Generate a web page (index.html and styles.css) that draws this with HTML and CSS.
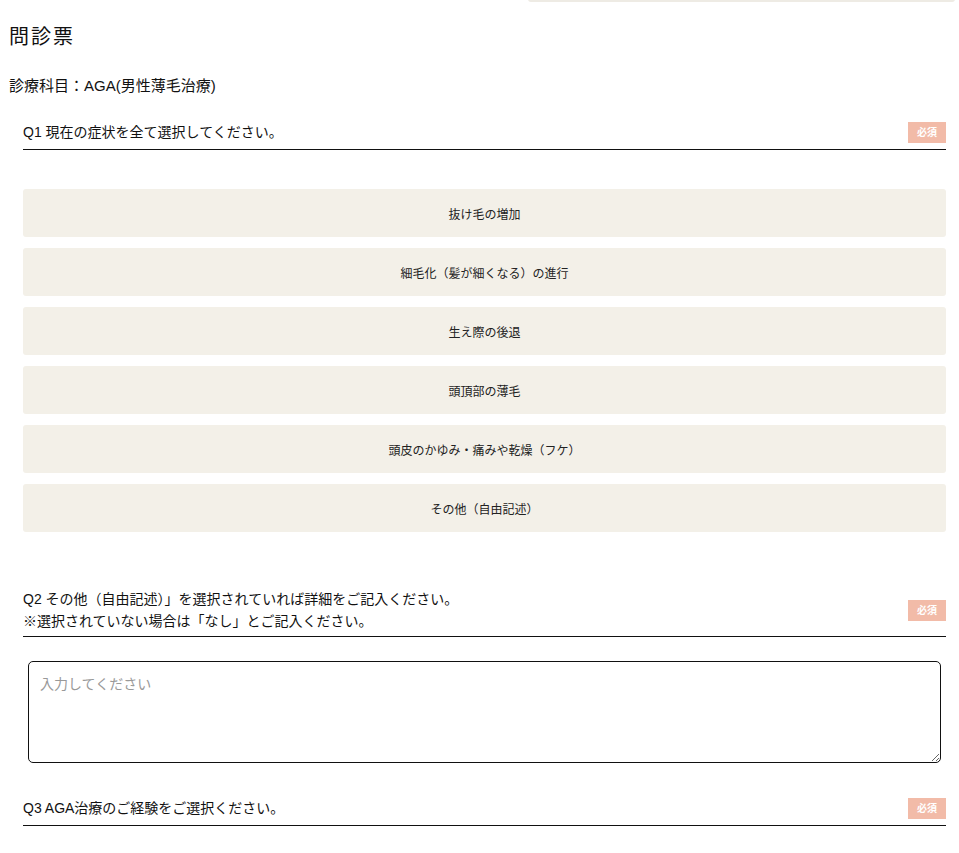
FILE: index.html
```html
<!DOCTYPE html>
<html lang="ja">
<head>
    <meta charset="UTF-8">
    <meta name="viewport" content="width=device-width, initial-scale=1.0">
    <title>問診票</title>
    <link rel="stylesheet" href="styles.css">
</head>
<body>
    <div class="top-bar"></div>

    <h1>問診票</h1>
    <p class="subject">診療科目：AGA(男性薄毛治療)</p>

    <div class="question q1">
        <div class="q-head">
            <p class="q-text">Q1 現在の症状を全て選択してください。</p>
            <span class="required">必須</span>
        </div>
        <div class="options">
            <button class="option">抜け毛の増加</button>
            <button class="option">細毛化（髪が細くなる）の進行</button>
            <button class="option">生え際の後退</button>
            <button class="option">頭頂部の薄毛</button>
            <button class="option">頭皮のかゆみ・痛みや乾燥（フケ）</button>
            <button class="option">その他（自由記述）</button>
        </div>
    </div>

    <div class="question q2">
        <div class="q-head">
            <p class="q-text">Q2 その他（自由記述）」を選択されていれば詳細をご記入ください。<br>※選択されていない場合は「なし」とご記入ください。</p>
            <span class="required">必須</span>
        </div>
        <textarea class="answer" placeholder="入力してください"></textarea>
    </div>

    <div class="question q3">
        <div class="q-head">
            <p class="q-text">Q3 AGA治療のご経験をご選択ください。</p>
            <span class="required">必須</span>
        </div>
    </div>
</body>
</html>
```

FILE: styles.css
```css
body {
    font-family: "Liberation Sans", Arial, "Noto Sans CJK JP", sans-serif;
    color: #222;
    margin: 0 13px 0 8px;
    background: #fff;
}
.top-bar {
    position: fixed;
    top: -40px;
    left: 528px;
    right: 4px;
    height: 40px;
    background: #fff;
    border-bottom: 2px solid #eeebe4;
    border-radius: 0 0 3px 3px;
}
h1 {
    font-size: 20px;
    font-weight: normal;
    letter-spacing: 2px;
    line-height: 30px;
    margin: 22px 0 0 1px;
    color: #111;
}
.subject {
    font-size: 15px;
    line-height: 20px;
    margin: 24px 0 0 1px;
    color: #111;
}
.question {
    padding-left: 15px;
}
.q-head {
    display: flex;
    align-items: center;
    justify-content: space-between;
    border-bottom: 1px solid #111;
    padding: 0 0 6px;
}
.q-text {
    margin: 0;
    font-size: 14px;
    line-height: 22px;
    color: #111;
}
.required {
    background: #f2bba8;
    color: #fff;
    font-size: 10px;
    font-weight: bold;
    width: 38px;
    height: 21px;
    line-height: 21px;
    text-align: center;
}
.q1 {
    margin-top: 25px;
}
.options {
    display: flex;
    flex-direction: column;
    gap: 11px;
    margin-top: 39px;
}
.option {
    height: 48px;
    border: none;
    border-radius: 3px;
    background: #f3f0e8;
    font-family: inherit;
    font-size: 12px;
    color: #222;
    cursor: pointer;
}
.q2 {
    margin-top: 56px;
}
.q2 .q-head {
    padding-bottom: 4px;
}
.answer {
    display: block;
    box-sizing: border-box;
    width: calc(100% - 10px);
    height: 102px;
    margin: 24px 5px 0;
    padding: 12px 11px;
    border: 1px solid #111;
    border-radius: 5px;
    font-family: inherit;
    font-size: 14px;
    line-height: 20px;
}
.answer::placeholder {
    color: #999;
}
.q3 {
    margin-top: 34px;
}
```
